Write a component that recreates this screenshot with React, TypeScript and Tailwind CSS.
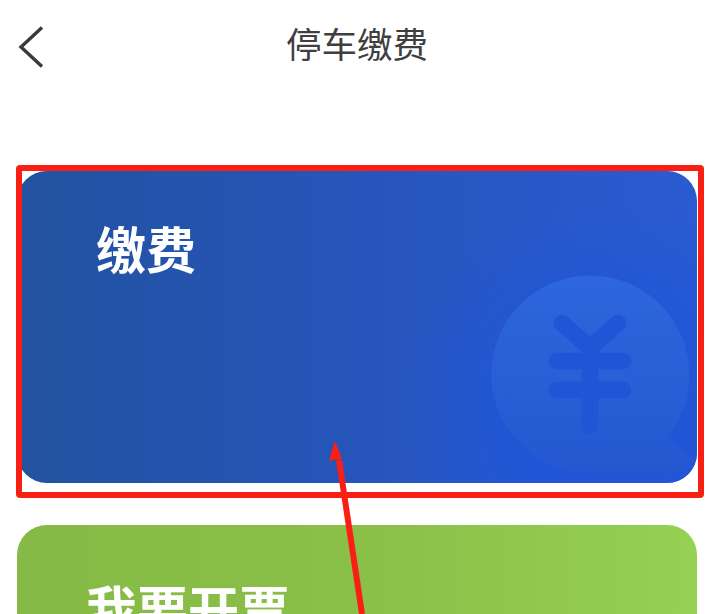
export default function App() {
  const font = { fontFamily: '"Noto Sans CJK SC", "Noto Sans", sans-serif' };
  return (
    <div style={font} className="relative h-[614px] w-[722px] overflow-hidden bg-white">
      <header className="relative flex h-[88px] items-center justify-center">
        <svg className="absolute left-[17px] top-[25px]" width="30" height="44" viewBox="0 0 30 44" fill="none">
          <path d="M25 2.5 L4 22 L25 41.5" stroke="#3a3a3a" strokeWidth="3.4" strokeLinejoin="miter" />
        </svg>
        <h1 className="ml-[-8px] mt-[-3px] text-[35.5px] leading-none font-normal text-[#3f3f3f]">停车缴费</h1>
      </header>

      <main className="flex flex-col gap-[42px] pl-[17px] pr-[25px] pt-[83px]">
        <section className="relative h-[312px] overflow-hidden rounded-[30px] bg-gradient-to-r from-[#22529f] via-[#2655bb] to-[#2a5bd2] pl-[79px] pt-[46px]">
          <h2 className="text-[50px] leading-[60px] font-semibold text-white">缴费</h2>
          <svg className="absolute left-0 top-0" width="680" height="312" viewBox="0 0 680 312" fill="none">
            <defs>
              <linearGradient id="coin" x1="0" y1="0" x2="0" y2="1">
                <stop offset="0" stopColor="#2d66de" />
                <stop offset="1" stopColor="#2558d0" />
              </linearGradient>
              <radialGradient id="shade" gradientUnits="userSpaceOnUse" cx="590" cy="240" r="210">
                <stop offset="0.45" stopColor="#2055d8" stopOpacity="0.85" />
                <stop offset="1" stopColor="#2055d8" stopOpacity="0" />
              </radialGradient>
            </defs>
            <rect x="300" y="0" width="380" height="312" fill="url(#shade)" />
            <path
              d="M573 104.5 A99 99 0 0 1 650 266 L677 290 Q668 302 650 302 L573 302 A98.75 98.75 0 0 1 573 104.5 Z"
              fill="url(#coin)"
            />
            <path
              d="M545 152 L573 177 L601 152 M573 177 L573 255 M540 190 L606 190 M540 219 L606 219"
              stroke="#2155d6"
              strokeWidth="16.5"
              strokeLinecap="round"
              strokeLinejoin="round"
            />
          </svg>
        </section>

        <section className="h-[200px] rounded-t-[30px] bg-gradient-to-r from-[#85ba46] via-[#8abf48] to-[#95d152] pl-[69px] pt-[52px]">
          <h2 className="text-[51px] leading-[60px] font-semibold text-white">我要开票</h2>
        </section>
      </main>

      <div className="absolute left-[16px] top-[165px] h-[333px] w-[688px] rounded-[4px] border-[6px] border-[#fa1f14]" />
      <svg className="absolute left-0 top-0" width="722" height="614" viewBox="0 0 722 614" fill="none">
        <path d="M339 460 L362 614" stroke="#fa1f14" strokeWidth="6" />
        <path d="M335 443 L341 458 L330 460 Z" fill="#fa1f14" stroke="#fa1f14" strokeWidth="1.5" strokeLinejoin="round" />
      </svg>
    </div>
  );
}
